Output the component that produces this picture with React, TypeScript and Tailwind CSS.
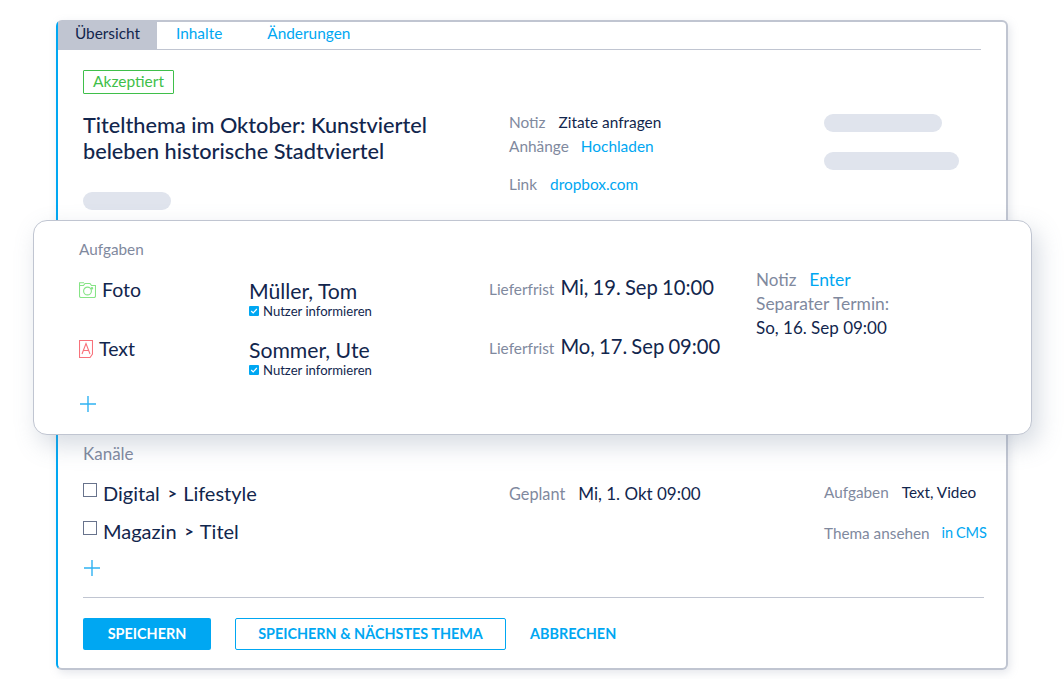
const font = { fontFamily: "Lato, 'Noto Sans', sans-serif" };

function Pill({ className }: { className: string }) {
  return <div className={`h-[18px] rounded-[9px] bg-[#e0e4ed] ${className}`} />;
}

function CameraIcon() {
  return (
    <svg width="17" height="16" viewBox="0 0 17 16" fill="none" stroke="#86e486" strokeWidth="1.1">
      <path d="M0.5 3.5V0.8H5" />
      <path d="M0.5 3.5H4.5L6 1.5H11L12.5 3.5H16.5V14C16.5 14.8 15.8 15.5 15 15.5H2C1.2 15.5 0.5 14.8 0.5 14Z" />
      <circle cx="8.5" cy="9" r="3.9" />
      <circle cx="13" cy="6.2" r="0.7" />
    </svg>
  );
}

function TextIcon() {
  return (
    <svg width="14" height="18" viewBox="0 0 14 18" fill="none" stroke="#f8727b" strokeWidth="1.1">
      <path d="M0.5 0.5H13.5V14L11 17.5H0.5Z" />
      <path d="M3 14L7 3.5L11 14M4.4 10.5H9.6" />
    </svg>
  );
}

function Plus() {
  return (
    <svg width="16" height="16" viewBox="0 0 16 16" stroke="#2fb2f2" strokeWidth="1.4">
      <path d="M8 0V16M0 8H16" />
    </svg>
  );
}

function Notify() {
  return (
    <div className="-mt-[1.5px] flex items-center gap-[4px] text-[13.1px] leading-[14px] text-[#12264d]">
      <span className="flex h-[10px] w-[10px] items-center justify-center rounded-[1px] bg-[#00a7f2]">
        <svg width="8" height="8" viewBox="0 0 8 8" fill="none" stroke="white" strokeWidth="1.2">
          <path d="M1.2 4L3.2 6L6.8 2" />
        </svg>
      </span>
      Nutzer informieren
    </div>
  );
}

function Task({ icon, label, name, date }: { icon: React.ReactNode; label: string; name: string; date: string }) {
  return (
    <div className="flex h-[59px] text-[#12264d]">
      <div className="flex w-[170px] items-center gap-[6px] self-start text-[19.5px] leading-[24px]">
        {icon}
        {label}
      </div>
      <div className="w-[240px]">
        <div className="text-[21.2px] leading-[27px]">{name}</div>
        <Notify />
      </div>
      <div className="-mt-[4px] flex items-baseline gap-[6px] self-start">
        <span className="text-[15.4px] text-[#7f899e]">Lieferfrist</span>
        <span className="text-[20.2px] leading-[26px] [word-spacing:-1px]">{date}</span>
      </div>
    </div>
  );
}

function Channel({ first, second }: { first: string; second: string }) {
  return (
    <div className="flex h-[38px] items-start text-[20px] leading-[24px] text-[#12264d]">
      <span className="mr-[6px] h-[14px] w-[14px] border border-[#68738c]" />
      <span className="-mt-[2px]">{first}</span>
      <span className="-mt-[2px] ml-[8px] mr-[6px] text-[16px] font-bold">&gt;</span>
      <span className="-mt-[2px]">{second}</span>
    </div>
  );
}

export default function App() {
  return (
    <div className="h-[679px] w-[1064px] overflow-hidden bg-white pl-[56px] pt-[20px]" style={font}>
      <div className="flex h-[650px] w-[952px] flex-col rounded-[6px] border-y-2 border-l-2 border-r-2 border-y-[#c0c5d1] border-l-[#00a7f2] border-r-[#c0c5d1] bg-white shadow-[2px_3px_8px_rgba(150,160,180,0.25)]">
        <div className="mr-[25px] flex h-[28px] border-b border-[#c0c5d1] text-[15.4px] leading-[23px]">
          <div className="w-[99px] bg-[#c0c5d1] text-center text-[#12264d]">Übersicht</div>
          <div className="ml-[19px] text-[#00a7f2]">Inhalte</div>
          <div className="ml-[45px] text-[#00a7f2]">Änderungen</div>
        </div>

        <div className="flex h-[170px] pl-[25px]">
          <div className="w-[426px] pt-[20px]">
            <div className="flex h-[24px] w-[91px] items-center justify-center rounded-[1px] border border-[#3fbf4a] text-[15.5px] text-[#3fbf4a]">
              Akzeptiert
            </div>
            <div className="mt-[18px] text-[21.7px] leading-[26px] font-medium text-[#12264d]">
              Titelthema im Oktober: Kunstviertel
              <br />
              beleben historische Stadtviertel
            </div>
            <Pill className="mt-[28px] w-[88px]" />
          </div>
          <div className="w-[315px] pt-[60px] text-[15.4px] leading-[24px]">
            <div className="flex gap-[13px]">
              <span className="text-[#7f899e]">Notiz</span>
              <span className="text-[#12264d]">Zitate anfragen</span>
            </div>
            <div className="flex gap-[12px]">
              <span className="text-[#7f899e]">Anhänge</span>
              <span className="text-[#00a7f2]">Hochladen</span>
            </div>
            <div className="mt-[14px] flex gap-[13px]">
              <span className="text-[#7f899e]">Link</span>
              <span className="text-[#00a7f2]">dropbox.com</span>
            </div>
          </div>
          <div className="pt-[64px]">
            <Pill className="w-[118px]" />
            <Pill className="mt-[20px] w-[135px]" />
          </div>
        </div>

        <div className="relative z-10 -mx-[25px] flex h-[215px] w-[999px] flex-col rounded-[14px] border border-[#c0c5d1] bg-white pl-[45px] pt-[19px] shadow-[6px_10px_24px_rgba(120,135,160,0.3)]">
          <div className="text-[15.3px] leading-[18px] text-[#7f899e]">Aufgaben</div>
          <div className="mt-[20px] flex">
            <div className="w-[677px]">
              <Task icon={<CameraIcon />} label="Foto" name="Müller, Tom" date="Mi, 19. Sep 10:00" />
              <Task icon={<TextIcon />} label="Text" name="Sommer, Ute" date="Mo, 17. Sep 09:00" />
            </div>
            <div className="-mt-[10px] text-[17px] leading-[24px]">
              <div className="flex gap-[13px]">
                <span className="text-[#7f899e]">Notiz</span>
                <span className="text-[17.5px] text-[#00a7f2]">Enter</span>
              </div>
              <div className="text-[17.4px] leading-[23px] text-[#7f899e]">Separater Termin:</div>
              <div className="mt-[1px] text-[#12264d]">So, 16. Sep 09:00</div>
            </div>
          </div>
          <div className="ml-px">
            <Plus />
          </div>
        </div>

        <div className="flex flex-1 flex-col pl-[25px] pr-[22px] pt-[9px]">
          <div className="text-[17px] leading-[20px] text-[#7f899e]">Kanäle</div>
          <div className="mt-[18px] flex">
            <div className="mt-px w-[426px] shrink-0">
              <Channel first="Digital" second="Lifestyle" />
              <Channel first="Magazin" second="Titel" />
            </div>
            <div className="flex w-[315px] shrink-0 items-start gap-[13px] leading-[24px]">
              <span className="text-[16.3px] text-[#7f899e]">Geplant</span>
              <span className="text-[17px] text-[#12264d]">Mi, 1. Okt 09:00</span>
            </div>
            <div className="-mt-[2px] shrink-0 whitespace-nowrap text-[15.3px]">
              <div className="flex h-[41px] gap-[13px] leading-[24px]">
                <span className="text-[#7f899e]">Aufgaben</span>
                <span className="text-[#12264d]">Text, Video</span>
              </div>
              <div className="flex gap-[12px] leading-[24px]">
                <span className="text-[#7f899e]">Thema ansehen</span>
                <span className="text-[14.5px] text-[#00a7f2] [word-spacing:-1px]">in CMS</span>
              </div>
            </div>
          </div>
          <div className="ml-px mt-[1px]">
            <Plus />
          </div>
          <div className="mt-[21px] border-t border-[#c0c5d1]" />
          <div className="mt-[20px] flex items-center text-[14.4px] font-bold">
            <button className="h-[32px] w-[128px] rounded-[2px] bg-[#00a7f2] text-white">SPEICHERN</button>
            <button className="ml-[24px] h-[32px] w-[271px] rounded-[2px] border border-[#00a7f2] text-[#00a7f2]">
              SPEICHERN &amp; NÄCHSTES THEMA
            </button>
            <button className="ml-[24px] text-[#00a7f2]">ABBRECHEN</button>
          </div>
        </div>
      </div>
    </div>
  );
}
